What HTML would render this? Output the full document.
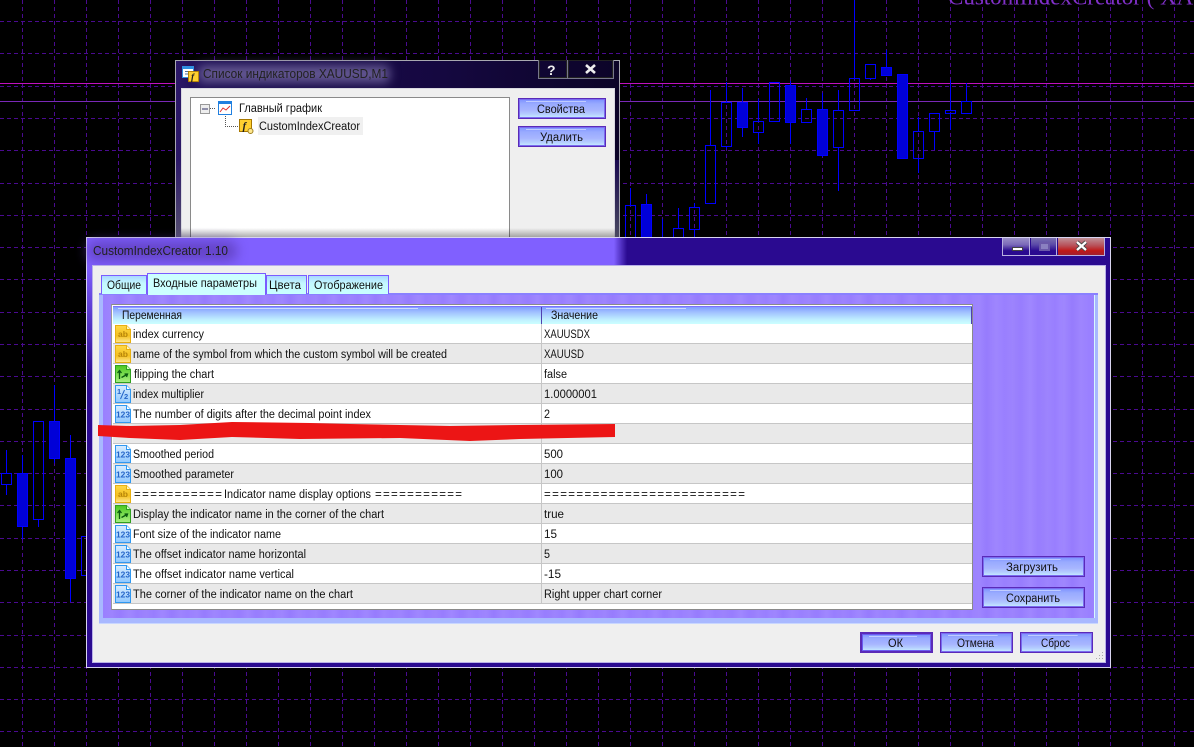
<!DOCTYPE html>
<html><head><meta charset="utf-8">
<style>
html,body{margin:0;padding:0;background:#000;}
#p{position:relative;width:1194px;height:747px;overflow:hidden;background:#000;}
#p div,#p svg{position:absolute;box-sizing:border-box;}
.btn{border:1px solid #5a2ab8;box-shadow:inset 0 0 0 1px #7a6cf0;background:linear-gradient(#c0ccff,#c0ccff) no-repeat 7px 2px/70% 1px,linear-gradient(#7a8eff 0,#98aaff 25%,#a8b6ff 60%,#b6d0ff 82%,#c8f0ff 100%);}
.row{left:113px;width:859px;height:20px;border-bottom:1px solid #c6c6c6;}
.w{background:#fff;}.g{background:#e9e9e9;}
.tab{border:1px solid #7a5cff;border-bottom:0;background:linear-gradient(#a8d8ff,#c4f8ff 40%,#c8ffff);}
text{font-family:"Liberation Sans",sans-serif;font-size:11.5px;fill:#111;}
.ic{font-weight:bold;font-size:8.5px;}
</style></head><body><div id="p">

<svg style="left:0;top:0" width="1194" height="747" shape-rendering="crispEdges">
<g stroke="#4a0a90" stroke-width="1" stroke-dasharray="4 3" fill="none">
<path d="M0 21.5H1194M0 53.5H1194M0 86.5H1194M0 118.5H1194M0 150.5H1194M0 183.5H1194M0 215.5H1194M0 247.5H1194M0 279.5H1194M0 312.5H1194M0 344.5H1194M0 376.5H1194M0 409.5H1194M0 441.5H1194M0 473.5H1194M0 505.5H1194M0 538.5H1194M0 570.5H1194M0 602.5H1194M0 635.5H1194M0 667.5H1194M0 699.5H1194M0 731.5H1194"/>
<path d="M22.5 0V747M54.5 0V747M86.5 0V747M118.5 0V747M150.5 0V747M182.5 0V747M214.5 0V747M246.5 0V747M278.5 0V747M310.5 0V747M342.5 0V747M374.5 0V747M406.5 0V747M438.5 0V747M470.5 0V747M502.5 0V747M534.5 0V747M566.5 0V747M598.5 0V747M630.5 0V747M662.5 0V747M694.5 0V747M726.5 0V747M758.5 0V747M790.5 0V747M822.5 0V747M854.5 0V747M886.5 0V747M918.5 0V747M950.5 0V747M982.5 0V747M1014.5 0V747M1046.5 0V747M1078.5 0V747M1110.5 0V747M1142.5 0V747M1174.5 0V747"/>
</g>
<path d="M0 83.5H1194" stroke="#c010c0"/>
<path d="M0 101.5H1194" stroke="#7a28b8"/>
<g stroke="#0000ff" fill="none">
<path d="M630.5 188V205M646.5 194V204M662.5 219V237M678.5 208V228M694.5 203V207M694.5 229V237M710.5 90V145M726.5 82V102M726.5 147V149M742.5 88V102M742.5 128V137M758.5 99V121M758.5 133V144M790.5 81V85M790.5 123V144M806.5 98V109M822.5 93V109M822.5 156V157M838.5 90V110M838.5 148V191M854.5 0V78M870.5 79V80M886.5 50V67M918.5 117V131M918.5 158V173M934.5 131V150M950.5 80V110M950.5 113V130M966.5 83V101"/>
<path d="M6.5 450V473M6.5 484V495M22.5 455V473M22.5 527V539M38.5 519V527M54.5 385V421M54.5 458V463M70.5 435V458M70.5 578V602"/>
<rect x="625.5" y="205.5" width="10" height="40"/><rect x="673.5" y="228.5" width="10" height="20"/><rect x="689.5" y="207.5" width="10" height="22"/><rect x="705.5" y="145.5" width="10" height="58"/><rect x="721.5" y="102.5" width="10" height="44"/><rect x="753.5" y="121.5" width="10" height="11"/><rect x="769.5" y="82.5" width="10" height="39"/><rect x="801.5" y="109.5" width="10" height="13"/><rect x="833.5" y="110.5" width="10" height="37"/><rect x="849.5" y="78.5" width="10" height="32"/><rect x="865.5" y="64.5" width="10" height="14"/><rect x="913.5" y="131.5" width="10" height="27"/><rect x="929.5" y="113.5" width="10" height="18"/><rect x="945.5" y="110.5" width="10" height="3"/><rect x="961.5" y="101.5" width="10" height="12"/>
<rect x="1.5" y="473.5" width="10" height="11"/><rect x="33.5" y="421.5" width="10" height="98"/><rect x="81.5" y="536.5" width="10" height="39"/>
<g fill="#0000d8"><rect x="641.5" y="204.5" width="10" height="40"/><rect x="737.5" y="102.5" width="10" height="25"/><rect x="785.5" y="85.5" width="10" height="37"/><rect x="817.5" y="109.5" width="10" height="46"/><rect x="881.5" y="67.5" width="10" height="8"/><rect x="897.5" y="74.5" width="10" height="84"/><rect x="17.5" y="473.5" width="10" height="53"/><rect x="49.5" y="421.5" width="10" height="37"/><rect x="65.5" y="458.5" width="10" height="120"/></g>
</g>
</svg>
<svg style="left:0;top:0" width="1194" height="20"><text x="948" y="4.5" style="font-family:'Liberation Serif',serif;font-size:23px;fill:#8030c8">CustomIndexCreator ( XAUSD</text></svg>

<!-- back window -->
<div style="left:175px;top:60px;width:445px;height:180px;border:1px solid #a8a8b0;border-bottom:0;background:linear-gradient(90deg,#2c1868 0,#1a0c50 8%,#150840 60%,#0c0428 100%);"></div>
<div style="left:176px;top:160px;width:5px;height:80px;background:linear-gradient(#2c1868,#565070);"></div>
<div style="left:615px;top:160px;width:4px;height:80px;background:linear-gradient(#1a0a50,#4a4a60);"></div>
<div style="left:198px;top:65px;width:192px;height:18px;background:#625690;filter:blur(5px);border-radius:6px;"></div>
<div style="left:181px;top:88px;width:434px;height:152px;background:#efefef;border:1px solid #d8d8e0;"></div>
<div style="left:190px;top:97px;width:320px;height:143px;background:#fff;border:1px solid #8a8a8a;border-bottom:0;"></div>
<div style="left:258px;top:117px;width:105px;height:18px;background:#f0f0f0;"></div>
<div style="left:181px;top:228px;width:434px;height:10px;background:linear-gradient(rgba(0,0,0,0),rgba(0,0,0,.35));"></div>
<div style="left:538px;top:60px;width:30px;height:19px;border:1px solid #77778a;border-top:0;box-shadow:inset 0 0 0 1px #222"></div>
<div style="left:567px;top:60px;width:47px;height:19px;border:1px solid #77778a;border-top:0;box-shadow:inset 0 0 0 1px #222"></div>
<div class="btn" style="left:518px;top:98px;width:88px;height:21px"></div>
<div class="btn" style="left:518px;top:126px;width:88px;height:21px"></div>

<!-- front window -->
<div style="left:86px;top:237px;width:1025px;height:431px;border:1px solid #d8d4f0;background:linear-gradient(90deg,#8060ff 0,#8060ff 51.5%,#2a0a90 52.8%,#2a0a90 100%) top/100% 30px no-repeat,#2a0a90;"></div>
<div style="left:87px;top:266px;width:5px;height:110px;background:linear-gradient(#8060ff,#2a0a90);"></div>
<div style="left:87px;top:241px;width:150px;height:20px;background:#5838b0;filter:blur(6px);border-radius:8px;opacity:.7"></div>
<div style="left:92px;top:265px;width:1014px;height:398px;background:#efefef;border:1px solid #b8b0e8;"></div>
<div style="left:1002px;top:238px;width:103px;height:18px;border:1px solid #b8b0e0;border-top:0;"></div>
<div style="left:1003px;top:238px;width:27px;height:17px;background:linear-gradient(#9a90c8,#7a68b8 40%,#2a0a90 75%);border-right:1px solid #b8b0e0;"></div>
<div style="left:1012px;top:247px;width:11px;height:4px;background:#fff;border:1px solid #444;"></div>
<div style="left:1031px;top:238px;width:26px;height:17px;background:linear-gradient(#7a70b0,#5a48a8 40%,#2a0a90 75%);border-right:1px solid #b8b0e0;"></div>
<div style="left:1039px;top:242px;width:11px;height:9px;border:2px solid #6a58a8;background:#8a80c0;"></div>
<div style="left:1058px;top:238px;width:46px;height:17px;background:linear-gradient(#c09098,#b85058 45%,#c01818 75%,#a02030);"></div>

<!-- tab panel -->
<div style="left:99px;top:293px;width:999px;height:331px;background:#a8b8ff;border-top:2px solid #8a80ff;border-bottom:1px solid #c8d6ff;"></div>
<div style="left:103px;top:295px;width:992px;height:323px;background:repeating-linear-gradient(90deg,rgba(255,255,255,0) 0,rgba(255,255,255,.06) 9px,rgba(255,255,255,0) 17px),repeating-linear-gradient(90deg,rgba(90,50,220,0) 0,rgba(90,50,220,.06) 13px,rgba(90,50,220,0) 29px),#9a80ff;border-right:1px solid #d8f8ff;"></div>
<div class="tab" style="left:101px;top:275px;width:46px;height:19px"></div>
<div class="tab" style="left:147px;top:273px;width:119px;height:22px;background:#ccffff;z-index:1"></div>
<div class="tab" style="left:266px;top:275px;width:41px;height:19px"></div>
<div class="tab" style="left:308px;top:275px;width:81px;height:19px"></div>

<!-- table -->
<div style="left:111px;top:304px;width:862px;height:306px;background:#fff;border:1px solid #8a8a8a;border-left-color:#999;"></div>
<div style="left:113px;top:306px;width:859px;height:18px;background:linear-gradient(#7f9cff 0,#a0c0ff 30%,#c0f0ff 75%,#ccffff 100%);border-top:1px solid #7c70ff;"></div>
<div style="left:971px;top:307px;width:1px;height:17px;background:#5040b0;"></div>
<div style="left:541px;top:307px;width:1px;height:17px;background:#5040b0;"></div>
<div style="left:118px;top:308px;width:300px;height:1px;background:#cfd8ff;"></div>
<div style="left:546px;top:308px;width:140px;height:1px;background:#cfd8ff;"></div>
<div class="row w" style="top:324px"></div><div class="row g" style="top:344px"></div><div class="row w" style="top:364px"></div><div class="row g" style="top:384px"></div><div class="row w" style="top:404px"></div><div class="row g" style="top:424px"></div><div class="row w" style="top:444px"></div><div class="row g" style="top:464px"></div><div class="row w" style="top:484px"></div><div class="row g" style="top:504px"></div><div class="row w" style="top:524px"></div><div class="row g" style="top:544px"></div><div class="row w" style="top:564px"></div><div class="row g" style="top:584px"></div>
<div style="left:541px;top:324px;width:1px;height:280px;background:#c6c6c6;"></div>

<div class="btn" style="left:982px;top:556px;width:103px;height:21px"></div>
<div class="btn" style="left:982px;top:587px;width:103px;height:21px"></div>
<div class="btn" style="left:860px;top:632px;width:73px;height:21px;border:2px solid #5a2ab8;box-shadow:inset 0 0 0 1px #6a5cf0"></div>
<div class="btn" style="left:940px;top:632px;width:73px;height:21px"></div>
<div class="btn" style="left:1020px;top:632px;width:73px;height:21px"></div>

<svg style="left:0;top:0;z-index:3" width="1194" height="747">
<defs>
<linearGradient id="y" x1="0" y1="0" x2="0" y2="1"><stop offset="0" stop-color="#ffd848"/><stop offset=".6" stop-color="#f4c020"/><stop offset="1" stop-color="#ffe890"/></linearGradient>
<linearGradient id="gr" x1="0" y1="0" x2="0" y2="1"><stop offset="0" stop-color="#4cc820"/><stop offset="1" stop-color="#a8f080"/></linearGradient>
<linearGradient id="b" x1="0" y1="0" x2="0" y2="1"><stop offset="0" stop-color="#d8ecff"/><stop offset="1" stop-color="#90c8ff"/></linearGradient>
<g id="fy"><path d="M.5.5H11.5L15.5 4.500V17.500H.5Z" fill="url(#y)" stroke="#e8b010"/><path d="M11.500.5V4.500H15.500" fill="#fff6c0" stroke="#e8b010"/><text x="3" y="12" class="ic" style="fill:#b8860a">ab</text></g>
<g id="fg"><path d="M.5.5H11.5L15.5 4.500V17.500H.5Z" fill="url(#gr)" stroke="#30a020"/><path d="M11.500.5V4.500H15.500" fill="#d0ffc0" stroke="#30a020"/><path d="M4.500 14V6M2.500 8L4.500 5.500L6.500 8M6.500 12.500L12 9.500M9.500 9L12.500 9L11.500 12" stroke="#0a5a10" stroke-width="1.300" fill="none"/></g>
<g id="fb"><path d="M.5.5H11.5L15.5 4.500V17.500H.5Z" fill="url(#b)" stroke="#3098f0"/><path d="M11.500.5V4.500H15.500" fill="#fff" stroke="#3098f0"/><text x="1" y="12.500" class="ic" textLength="14" lengthAdjust="spacingAndGlyphs" style="fill:#2464c8">123</text></g>
<g id="fh"><path d="M.5.5H11.5L15.5 4.500V17.500H.5Z" fill="url(#b)" stroke="#3098f0"/><path d="M11.500.5V4.500H15.500" fill="#fff" stroke="#3098f0"/><text x="2" y="9" class="ic" style="fill:#2464c8;font-size:7.500px">1</text><path d="M5.500 14L9.500 5" stroke="#2464c8"/><text x="9" y="14" class="ic" style="fill:#2464c8;font-size:7.500px">2</text></g>
<g id="ff"><rect x=".5" y=".5" width="12" height="12" fill="#ffd030" stroke="#a87800"/><text x="3.500" y="10.500" style="font-family:'Liberation Serif',serif;font-style:italic;font-weight:bold;font-size:11px;fill:#222">f</text></g>
</defs>
<!-- scribble -->
<path d="M98 425L130 426L180 425L232 422L310 423L350 424L450 426L520 425L615 424L615 437L520 439L470 441L400 438L300 439L232 437L180 440L130 438L98 436Z" fill="#ec1515"/>

<use href="#fy" x="115" y="325"/><use href="#fy" x="115" y="345"/><use href="#fg" x="115" y="365"/><use href="#fh" x="115" y="385"/><use href="#fb" x="115" y="405"/><use href="#fb" x="115" y="445"/><use href="#fb" x="115" y="465"/><use href="#fy" x="115" y="485"/><use href="#fg" x="115" y="505"/><use href="#fb" x="115" y="525"/><use href="#fb" x="115" y="545"/><use href="#fb" x="115" y="565"/><use href="#fb" x="115" y="585"/>

<!-- tree icons -->
<rect x="200.500" y="104.500" width="9" height="9" fill="#eee" stroke="#999"/><path d="M202 109H208" stroke="#336" />
<path d="M210 108.500H216M225.500 116V126.500H238" stroke="#555" stroke-dasharray="1 1" fill="none"/>
<rect x="218.500" y="101.500" width="13" height="13" fill="#fff" stroke="#2080e0"/><rect x="219" y="102" width="12" height="2" fill="#2080e0"/><path d="M220 112L223 108L226 110L230 106" stroke="#e03030" fill="none"/>
<use href="#ff" x="239" y="119"/><circle cx="250.500" cy="131" r="2.500" fill="#ffe890" stroke="#a08020"/>
<rect x="182.500" y="66.500" width="11" height="11" fill="#fff" stroke="#3090e0"/><rect x="183" y="67" width="10" height="2" fill="#3090e0"/><path d="M185 71.500H191M185 74H191" stroke="#5070a0"/>
<use href="#ff" transform="translate(188 71) scale(.85)"/>
<!-- window glyphs -->
<text x="547" y="75" style="font-size:14px;font-weight:bold;fill:#eee">?</text>
<path d="M586 65L595 73M595 65L586 73" stroke="#eee" stroke-width="2.600"/>
<path d="M1077 242L1086 250M1086 242L1077 250" stroke="#444" stroke-width="4"/><path d="M1077 242L1086 250M1086 242L1077 250" stroke="#fff" stroke-width="2.200"/>
<g fill="#aaa"><rect x="1102" y="652" width="1" height="1"/><rect x="1102" y="655" width="1" height="1"/><rect x="1099" y="655" width="1" height="1"/><rect x="1102" y="658" width="1" height="1"/><rect x="1099" y="658" width="1" height="1"/><rect x="1096" y="658" width="1" height="1"/></g>

<!-- text -->
<g>
<text lengthAdjust="spacingAndGlyphs" x="203" y="78" textLength="185" style="font-size:12.5px;fill:#222">Список индикаторов XAUUSD,M1</text>
<text lengthAdjust="spacingAndGlyphs" x="239" y="112" textLength="83">Главный график</text>
<text lengthAdjust="spacingAndGlyphs" x="259" y="130" textLength="101">CustomIndexCreator</text>
<text lengthAdjust="spacingAndGlyphs" x="537" y="113" textLength="48">Свойства</text>
<text lengthAdjust="spacingAndGlyphs" x="540" y="141" textLength="43">Удалить</text>
<text lengthAdjust="spacingAndGlyphs" x="93" y="255" textLength="135" style="font-size:12.5px;fill:#222">CustomIndexCreator 1.10</text>
<text lengthAdjust="spacingAndGlyphs" x="107" y="289" textLength="34">Общие</text>
<text lengthAdjust="spacingAndGlyphs" x="153" y="287" textLength="104">Входные параметры</text>
<text lengthAdjust="spacingAndGlyphs" x="269" y="289" textLength="32">Цвета</text>
<text lengthAdjust="spacingAndGlyphs" x="314" y="289" textLength="69">Отображение</text>
<text lengthAdjust="spacingAndGlyphs" x="122" y="319" textLength="60">Переменная</text>
<text lengthAdjust="spacingAndGlyphs" x="551" y="319" textLength="47">Значение</text>

<text lengthAdjust="spacingAndGlyphs" x="133" y="338" textLength="71">index currency</text>
<text lengthAdjust="spacingAndGlyphs" x="133" y="358" textLength="314">name of the symbol from which the custom symbol will be created</text>
<text lengthAdjust="spacingAndGlyphs" x="134" y="378" textLength="80">flipping the chart</text>
<text lengthAdjust="spacingAndGlyphs" x="133" y="398" textLength="71">index multiplier</text>
<text lengthAdjust="spacingAndGlyphs" x="133" y="418" textLength="238">The number of digits after the decimal point index</text>
<text lengthAdjust="spacingAndGlyphs" x="133" y="458" textLength="81">Smoothed period</text>
<text lengthAdjust="spacingAndGlyphs" x="133" y="478" textLength="101">Smoothed parameter</text>
<text x="134" y="498" textLength="88">===========</text>
<text lengthAdjust="spacingAndGlyphs" x="224" y="498" textLength="147">Indicator name display options</text>
<text x="375" y="498" textLength="87">===========</text>
<text lengthAdjust="spacingAndGlyphs" x="133" y="518" textLength="251">Display the indicator name in the corner of the chart</text>
<text lengthAdjust="spacingAndGlyphs" x="133" y="538" textLength="148">Font size of the indicator name</text>
<text lengthAdjust="spacingAndGlyphs" x="133" y="558" textLength="173">The offset indicator name horizontal</text>
<text lengthAdjust="spacingAndGlyphs" x="133" y="578" textLength="161">The offset indicator name vertical</text>
<text lengthAdjust="spacingAndGlyphs" x="133" y="598" textLength="220">The corner of the indicator name on the chart</text>

<text lengthAdjust="spacingAndGlyphs" x="544" y="338" textLength="46">XAUUSDX</text>
<text lengthAdjust="spacingAndGlyphs" x="544" y="358" textLength="40">XAUUSD</text>
<text lengthAdjust="spacingAndGlyphs" x="544" y="378" textLength="23">false</text>
<text lengthAdjust="spacingAndGlyphs" x="544" y="398" textLength="53">1.0000001</text>
<text lengthAdjust="spacingAndGlyphs" x="544" y="418" textLength="6">2</text>
<text lengthAdjust="spacingAndGlyphs" x="544" y="458" textLength="19">500</text>
<text lengthAdjust="spacingAndGlyphs" x="544" y="478" textLength="19">100</text>
<text x="544" y="498" textLength="201">=========================</text>
<text lengthAdjust="spacingAndGlyphs" x="544" y="518" textLength="20">true</text>
<text lengthAdjust="spacingAndGlyphs" x="544" y="538" textLength="13">15</text>
<text lengthAdjust="spacingAndGlyphs" x="544" y="558" textLength="6">5</text>
<text lengthAdjust="spacingAndGlyphs" x="544" y="578" textLength="17">-15</text>
<text lengthAdjust="spacingAndGlyphs" x="544" y="598" textLength="118">Right upper chart corner</text>

<text lengthAdjust="spacingAndGlyphs" x="1006" y="571" textLength="52">Загрузить</text>
<text lengthAdjust="spacingAndGlyphs" x="1006" y="602" textLength="54">Сохранить</text>
<text lengthAdjust="spacingAndGlyphs" x="888" y="647" textLength="15">ОК</text>
<text lengthAdjust="spacingAndGlyphs" x="957" y="647" textLength="37">Отмена</text>
<text lengthAdjust="spacingAndGlyphs" x="1041" y="647" textLength="29">Сброс</text>
</g>
</svg>
</div></body></html>
